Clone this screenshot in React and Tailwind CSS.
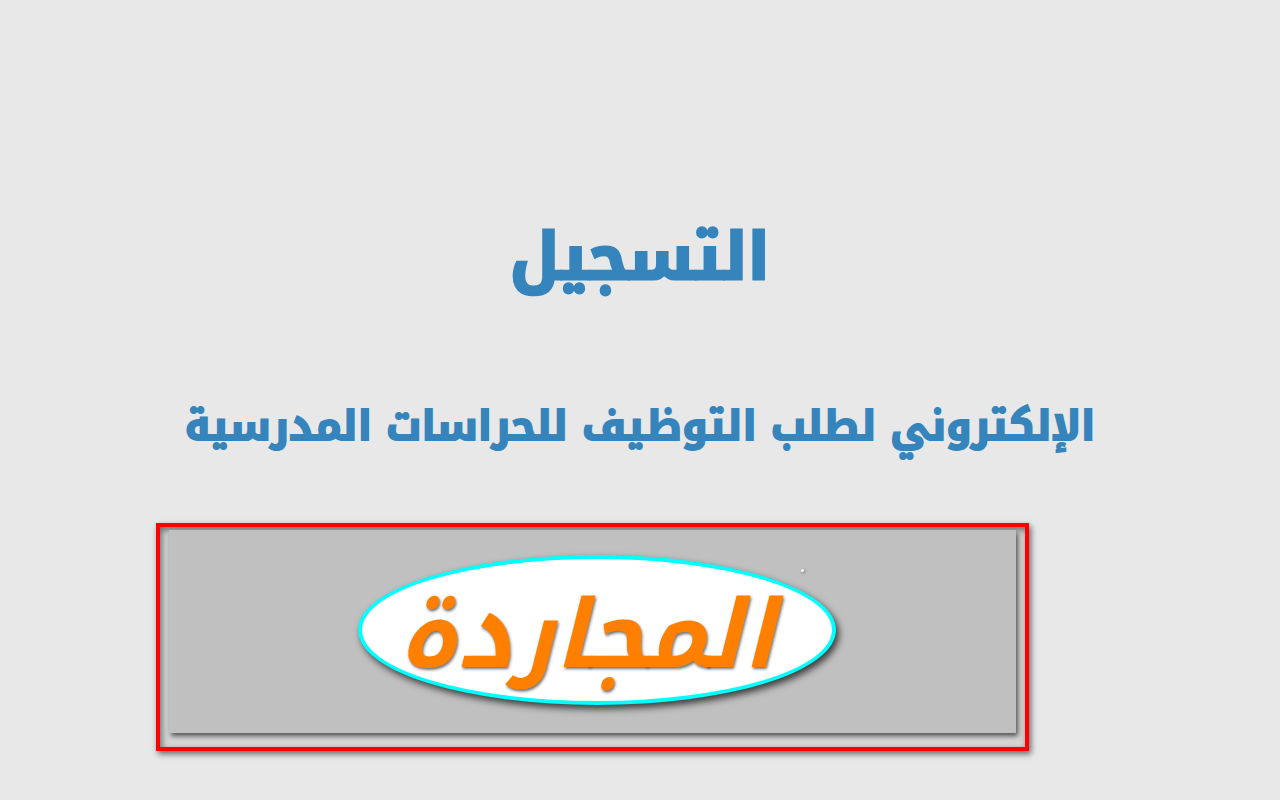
import React from "react";

const App = () => {
  return (
    <main
      dir="rtl"
      className="min-h-screen bg-[#e8e8e8] pt-[188px] pb-12 font-['Noto_Kufi_Arabic','DejaVu_Sans',sans-serif]"
    >
      {/* Heading */}
      <header className="text-center font-bold text-[#3584bb]">
        <h1 className="text-[64px] leading-[140px] [-webkit-text-stroke:3px_#3584bb]">
          التسجيل
        </h1>
        <p className="mt-7 text-[41px] leading-[140px] [-webkit-text-stroke:2px_#3584bb]">
          الإلكتروني لطلب التوظيف للحراسات المدرسية
        </p>
      </header>

      {/* Town banner */}
      <section className="mt-[27px] mr-[251px] ml-[156px] border-4 border-[#ff0000] bg-[#d6d6d6] pt-[3px] pr-[9px] pb-[14px] pl-[9px] shadow-[2px_3px_6px_#00000090,inset_2px_3px_6px_#00000080]">
        <div className="flex justify-center bg-[#c0c0c0] pt-[25px] pb-[28px] pl-2 shadow-[2px_3px_5px_#000000a0]">
          <div className="relative flex h-[150px] w-[478px] items-center justify-center rounded-[50%] border-4 border-[#00ffff] bg-white pt-3 pr-5 shadow-[3px_4px_7px_#000000b0]">
            <h2 className="text-[94px] leading-none font-bold text-[#ff8000] italic [-webkit-text-stroke:5px_white] [paint-order:stroke_fill] [text-shadow:1px_2px_3px_#00000090]">
              المجاردة
            </h2>
            <span className="absolute top-2.5 right-7 size-[3px] rounded-full bg-white shadow-[1px_1px_3px_#00000080]" />
          </div>
        </div>
      </section>
    </main>
  );
};

export default App;
